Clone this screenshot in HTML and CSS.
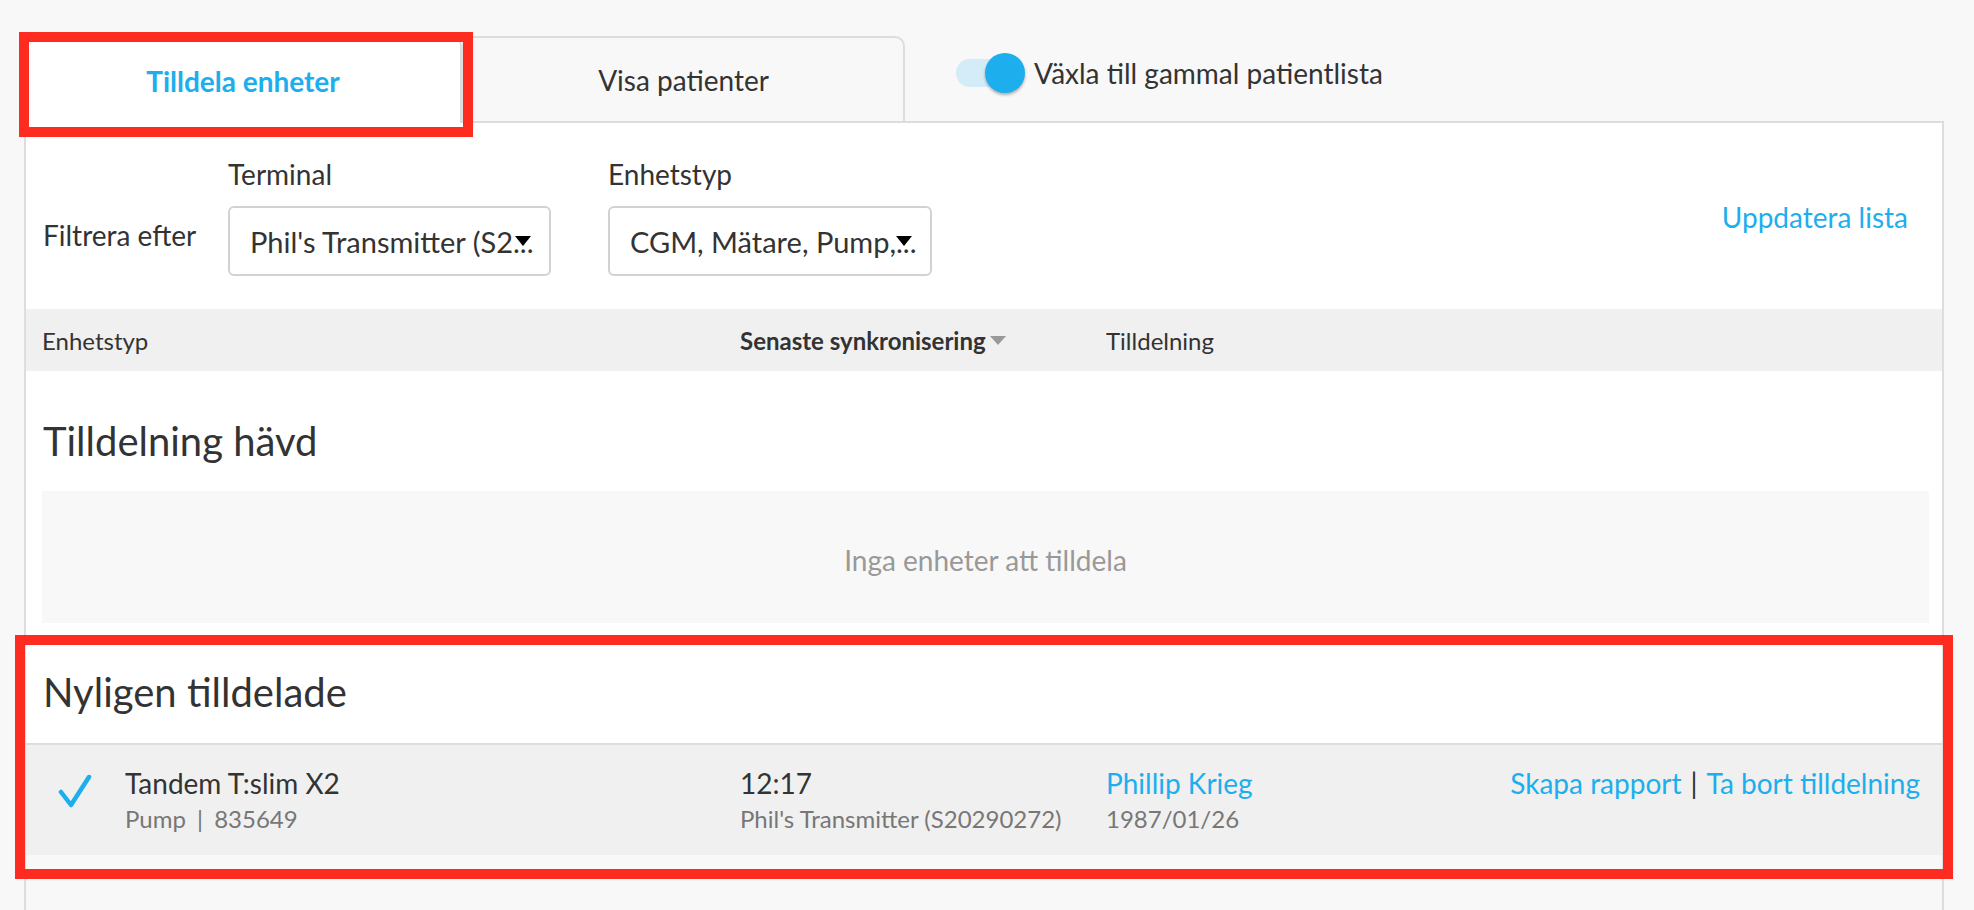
FILE: index.html
```html
<!DOCTYPE html>
<html lang="sv">
<head>
<meta charset="utf-8">
<title>Tilldela enheter</title>
<link rel="stylesheet" href="styles.css">
</head>
<body>
<div class="page">
  <div class="tabbar">
    <div class="tab tab-active">Tilldela enheter</div>
    <div class="tab tab-other">Visa patienter</div>
    <div class="switch-wrap">
      <span class="switch"><span class="switch-track"></span><span class="switch-thumb"></span></span>
      <span class="switch-label">Växla till gammal patientlista</span>
    </div>
  </div>

  <div class="panel">
    <div class="filters">
      <div class="filter-title">Filtrera efter</div>
      <div class="filter-group">
        <div class="filter-label">Terminal</div>
        <div class="select"><span class="select-text">Phil's Transmitter (S2...</span><span class="caret"></span></div>
      </div>
      <div class="filter-group filter-group-2">
        <div class="filter-label">Enhetstyp</div>
        <div class="select"><span class="select-text">CGM, Mätare, Pump,...</span><span class="caret"></span></div>
      </div>
      <a class="link refresh">Uppdatera lista</a>
    </div>

    <div class="table-head cols">
      <div>Enhetstyp</div>
      <div class="sorted">Senaste synkronisering<span class="sort-caret"></span></div>
      <div>Tilldelning</div>
    </div>

    <section class="block">
      <h2 class="block-title">Tilldelning hävd</h2>
      <div class="empty">Inga enheter att tilldela</div>
    </section>

    <section class="block">
      <h2 class="block-title block-title-2">Nyligen tilldelade</h2>
      <div class="row cols">
        <div class="cell-device">
          <svg class="check" width="34" height="34" viewBox="0 0 34 34"><polyline points="3,18 13,31 31,3" fill="none" stroke="#1daeee" stroke-width="4.5" stroke-linecap="round" stroke-linejoin="round"/></svg>
          <div>
            <div class="main">Tandem T:slim X2</div>
            <div class="sub">Pump <span class="sep">|</span> 835649</div>
          </div>
        </div>
        <div>
          <div class="main">12:17</div>
          <div class="sub">Phil's Transmitter (S20290272)</div>
        </div>
        <div class="cell-assign">
          <div>
            <div class="main link">Phillip Krieg</div>
            <div class="sub">1987/01/26</div>
          </div>
          <div class="main actions"><a class="link">Skapa rapport</a><span class="pipe">|</span><a class="link">Ta bort tilldelning</a></div>
        </div>
      </div>
    </section>
    <div class="panel-foot"></div>
  </div>

  <div class="mark mark-tab"></div>
  <div class="mark mark-recent"></div>
</div>
</body>
</html>
```

FILE: styles.css
```css
* { box-sizing: border-box; }
html, body { margin: 0; padding: 0; }
body {
  background: #f8f8f8;
  font-family: Lato, "Open Sans", "Liberation Sans", sans-serif;
  color: #333;
  overflow: hidden;
}
.page {
  position: relative;
  padding: 36px 30px 0 24px;
}
.link { color: #1daeee; text-decoration: none; cursor: pointer; }

/* tabs */
.tabbar {
  display: flex;
  height: 85px;
  align-items: stretch;
}
.tab {
  border: 2px solid #ddd;
  border-bottom: 0;
  border-radius: 10px 10px 0 0;
  display: flex;
  align-items: center;
  justify-content: center;
  font-size: 28px;
  color: #333;
}
.tab-active {
  width: 438px;
  height: 87px;
  margin-bottom: -2px;
  background: #fff;
  color: #1daeee;
  font-weight: 700;
  position: relative;
  z-index: 1;
}
.tab-other {
  width: 443px;
  background: #f8f8f8;
}
.switch-wrap {
  display: flex;
  align-items: center;
  align-self: center;
  margin: 0 0 11px 51px;
}
.switch {
  position: relative;
  width: 69px;
  height: 40px;
  display: block;
}
.switch-track {
  position: absolute;
  left: 0; top: 6px;
  width: 56px; height: 28px;
  border-radius: 14px;
  background: #d4ebf8;
}
.switch-thumb {
  position: absolute;
  left: 29px; top: 0;
  width: 40px; height: 40px;
  border-radius: 50%;
  background: #1daeee;
  box-shadow: 0 2px 3px rgba(0,0,0,0.3);
}
.switch-label {
  margin-left: 9px;
  font-size: 28px;
  color: #333;
}

/* panel */
.panel {
  border: 2px solid #ddd;
  background: #fff;
}
.filters {
  display: flex;
  align-items: flex-end;
  padding: 35px 34px 33px 17px;
}
.filter-title {
  width: 185px;
  flex-shrink: 0;
  font-size: 28px;
  line-height: 32px;
  margin-bottom: 25px;
}
.filter-group { width: 323px; flex-shrink: 0; }
.filter-group-2 { width: 324px; margin-left: 57px; }
.filter-label {
  font-size: 28px;
  line-height: 32px;
  margin-bottom: 16px;
}
.select {
  position: relative;
  height: 70px;
  border: 2px solid #d2d2d2;
  border-radius: 6px;
  padding: 0 20px;
  display: flex;
  align-items: center;
  font-size: 29px;
  background: #fff;
  overflow: hidden;
}
.select-text { white-space: nowrap; }
.caret {
  position: absolute;
  right: 18px;
  top: 28px;
  width: 0; height: 0;
  border-left: 8px solid transparent;
  border-right: 8px solid transparent;
  border-top: 10px solid #000;
}
.refresh {
  margin-left: auto;
  align-self: flex-start;
  margin-top: 42px;
  font-size: 28px;
  line-height: 34px;
}

/* table */
.cols {
  display: grid;
  grid-template-columns: 698px 366px 1fr;
  padding-left: 16px;
}
.table-head {
  height: 62px;
  align-items: center;
  background: #f0f0f0;
  font-size: 24px;
}
.sorted {
  font-weight: 700;
  display: flex;
  align-items: center;
}
.sort-caret {
  margin-left: 4px;
  width: 0; height: 0;
  border-left: 8px solid transparent;
  border-right: 8px solid transparent;
  border-top: 9px solid #999;
}

.block-title {
  font-size: 40px;
  font-weight: 400;
  line-height: 48px;
  margin: 46px 0 26px 17px;
  color: #333;
}
.block-title-2 { margin-top: 45px; margin-bottom: 27px; }
.empty {
  margin: 0 13px 0 16px;
  height: 132px;
  background: #f8f8f8;
  display: flex;
  align-items: center;
  justify-content: center;
  font-size: 28px;
  color: #999;
  padding-top: 6px;
}

.row {
  border-top: 2px solid #ddd;
  background: #f0f0f0;
  padding: 20px 22px 18px 16px;
}
.cell-device {
  display: flex;
  align-items: flex-start;
}
.check {
  display: block;
  margin: 9px 33px 0 16px;
  flex-shrink: 0;
}
.main { font-size: 28px; line-height: 36px; }
.sub { font-size: 24px; line-height: 36px; color: #777; }
.sep { margin: 0 5px; }
.cell-assign {
  display: flex;
  justify-content: space-between;
  align-items: flex-start;
}
.actions { white-space: nowrap; }
.pipe { color: #333; margin: 0 9px; }

.panel-foot {
  height: 80px;
  background: #f8f8f8;
}

/* annotation frames */
.mark {
  position: absolute;
  border: 10px solid #fe2b20;
  pointer-events: none;
  z-index: 5;
}
.mark-tab { left: 19px; top: 32px; width: 454px; height: 105px; }
.mark-recent { left: 15px; top: 635px; width: 1938px; height: 244px; }
```
